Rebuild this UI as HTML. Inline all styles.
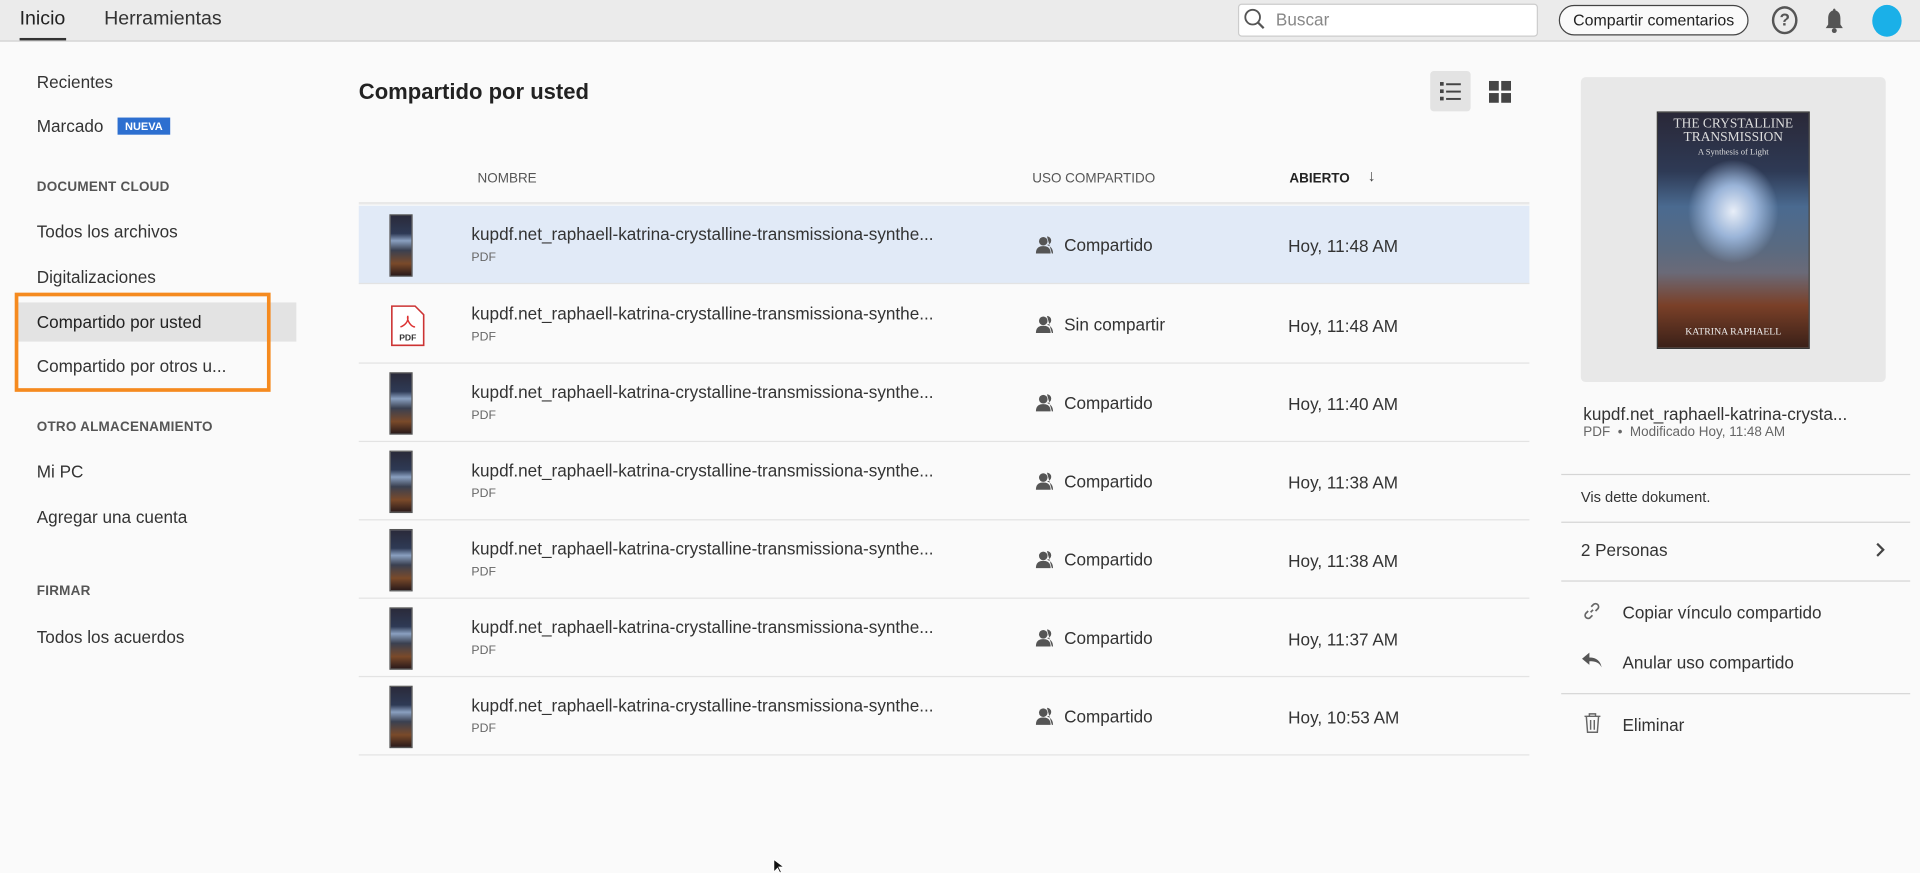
<!DOCTYPE html>
<html><head><meta charset="utf-8"><style>
*{margin:0;padding:0;box-sizing:border-box}
html,body{width:1920px;height:873px;overflow:hidden;background:#fafafa}
#w{position:absolute;left:0;top:0;width:1568px;height:713px;transform:scale(1.22449);transform-origin:0 0;font-family:"Liberation Sans",sans-serif;color:#2c2c2c}
.a{position:absolute;white-space:nowrap}
.top{position:absolute;left:0;top:0;width:1568px;height:34px;background:#ebebeb;border-bottom:1px solid #d0d0d0}
.side{font-size:14px;color:#333}
.cap{font-size:11px;font-weight:bold;color:#555;letter-spacing:0.2px}
.hdr{font-size:11px;color:#555}
.row{position:absolute;left:293px;width:956px;height:64px;border-bottom:1px solid #e3e3e3}
.fn{position:absolute;left:92px;top:15px;font-size:14px;color:#333}
.pdf{position:absolute;left:92px;top:37px;font-size:10px;color:#666}
.sh{position:absolute;left:552px;top:24px;font-size:14px;color:#333}
.dt{position:absolute;left:759px;top:25px;font-size:14px;color:#333}
.th{position:absolute;left:25px;top:7px;width:19px;height:51px;background:linear-gradient(180deg,#2a2a3a 0%,#2e3a55 30%,#8aa0c0 42%,#3a4050 58%,#7a4a2a 80%,#2a1a1a 100%);border:1px solid #555}
.hl{position:absolute;left:1275px;width:285px;height:1px;background:#d5d5d5}
.rp{font-size:14px;color:#333}
</style></head><body><div id="w">
<div class="top"></div>
<div class="a" style="left:16px;top:7px;font-size:16px;color:#222">Inicio</div>
<div class="a" style="left:16px;top:31px;width:38px;height:2px;background:#333"></div>
<div class="a" style="left:85px;top:7px;font-size:16px;color:#333">Herramientas</div>
<div class="a" style="left:1011px;top:3px;width:245px;height:27px;background:#fff;border:1px solid #ccc;border-radius:3px"></div>
<svg class="a" style="left:1015px;top:6px" width="20" height="20" viewBox="0 0 20 20"><circle cx="8" cy="8" r="6" fill="none" stroke="#555" stroke-width="1.5"/><path d="M12 12l5 5" stroke="#555" stroke-width="1.8"/></svg>
<div class="a" style="left:1042px;top:8px;font-size:14px;color:#888">Buscar</div>
<div class="a" style="left:1273px;top:4px;width:155px;height:25px;border:1px solid #444;border-radius:13px;background:#fafafa;font-size:13px;line-height:23px;text-align:center;color:#222">Compartir comentarios</div>
<div class="a" style="left:1447px;top:5px;width:21px;height:23px;border:2px solid #555;border-radius:50%;font-size:14px;font-weight:bold;text-align:center;line-height:19px;color:#555">?</div>
<svg class="a" style="left:1489px;top:6px" width="18" height="22" viewBox="0 0 18 22"><path d="M9 1c1 0 1 1 1 1.5C13 3.5 14 6 14 9v5l2 3H2l2-3V9c0-3 1-5.5 4-6.5C8 2 8 1 9 1z" fill="#555"/><circle cx="9" cy="19" r="2" fill="#555"/></svg>
<div class="a" style="left:1529px;top:4px;width:24px;height:26px;border-radius:50%;background:#1ab0e8"></div>

<div class="a side" style="left:30px;top:59px">Recientes</div>
<div class="a side" style="left:30px;top:95px">Marcado</div>
<div class="a" style="left:96px;top:96px;width:43px;height:14px;background:#2d6fd0;color:#fff;font-size:9px;font-weight:bold;text-align:center;line-height:14px">NUEVA</div>
<div class="a cap" style="left:30px;top:147px">DOCUMENT CLOUD</div>
<div class="a side" style="left:30px;top:181px">Todos los archivos</div>
<div class="a side" style="left:30px;top:218px">Digitalizaciones</div>
<div class="a" style="left:14px;top:247px;width:228px;height:32px;background:#e3e3e3"></div>
<div class="a side" style="left:30px;top:255px;color:#222">Compartido por usted</div>
<div class="a side" style="left:30px;top:291px">Compartido por otros u...</div>
<div class="a" style="left:12px;top:239px;width:209px;height:81px;border:3px solid #f58a1f"></div>
<div class="a cap" style="left:30px;top:343px">OTRO ALMACENAMIENTO</div>
<div class="a side" style="left:30px;top:377px">Mi PC</div>
<div class="a side" style="left:30px;top:414px">Agregar una cuenta</div>
<div class="a cap" style="left:30px;top:477px">FIRMAR</div>
<div class="a side" style="left:30px;top:512px">Todos los acuerdos</div>

<div class="a" style="left:293px;top:65px;font-size:18px;font-weight:bold;color:#222">Compartido por usted</div>
<div class="a" style="left:1168px;top:58px;width:33px;height:33px;background:#e3e3e3;border-radius:3px"></div>
<svg class="a" style="left:1175px;top:65px" width="20" height="20" viewBox="0 0 20 20" fill="#444"><rect x="1" y="2" width="3" height="3"/><rect x="6" y="3" width="12" height="1.6"/><rect x="1" y="8" width="3" height="3"/><rect x="6" y="9" width="12" height="1.6"/><rect x="1" y="14" width="3" height="3"/><rect x="6" y="15" width="12" height="1.6"/></svg>
<svg class="a" style="left:1216px;top:66px" width="18" height="18" viewBox="0 0 18 18" fill="#444"><rect x="0" y="0" width="8" height="8"/><rect x="10" y="0" width="8" height="8"/><rect x="0" y="10" width="8" height="8"/><rect x="10" y="10" width="8" height="8"/></svg>

<div class="a hdr" style="left:390px;top:140px">NOMBRE</div>
<div class="a hdr" style="left:843px;top:140px">USO COMPARTIDO</div>
<div class="a hdr" style="left:1053px;top:140px;font-weight:bold;color:#222">ABIERTO</div>
<div class="a" style="left:1117px;top:136px;font-size:13px;color:#444">↓</div>
<div class="a" style="left:293px;top:165px;width:956px;height:2px;background:#e8e8e8"></div>

<div class="row" style="top:168px;background:#e1eaf7"><div class="th"></div><div class="fn">kupdf.net_raphaell-katrina-crystalline-transmissiona-synthe...</div><div class="pdf">PDF</div><div class="sh" style="left:576px">Compartido</div><div class="dt">Hoy, 11:48 AM</div></div>
<div class="row" style="top:233px"><svg class="a" style="left:26px;top:16px" width="28" height="34" viewBox="0 0 28 34"><path d="M1 1h19l7 7v25H1z" fill="#fff" stroke="#c33" stroke-width="1.3"/><path d="M8 18c3-1 7-4 6-9-1 4 3 9 6 9" fill="none" stroke="#d33" stroke-width="1.2"/><text x="14" y="29" font-size="7" font-family="Liberation Sans" text-anchor="middle" fill="#333" font-weight="bold">PDF</text></svg><div class="fn">kupdf.net_raphaell-katrina-crystalline-transmissiona-synthe...</div><div class="pdf">PDF</div><div class="sh" style="left:576px">Sin compartir</div><div class="dt">Hoy, 11:48 AM</div></div>
<div class="row" style="top:297px"><div class="th"></div><div class="fn">kupdf.net_raphaell-katrina-crystalline-transmissiona-synthe...</div><div class="pdf">PDF</div><div class="sh" style="left:576px">Compartido</div><div class="dt">Hoy, 11:40 AM</div></div>
<div class="row" style="top:361px"><div class="th"></div><div class="fn">kupdf.net_raphaell-katrina-crystalline-transmissiona-synthe...</div><div class="pdf">PDF</div><div class="sh" style="left:576px">Compartido</div><div class="dt">Hoy, 11:38 AM</div></div>
<div class="row" style="top:425px"><div class="th"></div><div class="fn">kupdf.net_raphaell-katrina-crystalline-transmissiona-synthe...</div><div class="pdf">PDF</div><div class="sh" style="left:576px">Compartido</div><div class="dt">Hoy, 11:38 AM</div></div>
<div class="row" style="top:489px"><div class="th"></div><div class="fn">kupdf.net_raphaell-katrina-crystalline-transmissiona-synthe...</div><div class="pdf">PDF</div><div class="sh" style="left:576px">Compartido</div><div class="dt">Hoy, 11:37 AM</div></div>
<div class="row" style="top:553px"><div class="th"></div><div class="fn">kupdf.net_raphaell-katrina-crystalline-transmissiona-synthe...</div><div class="pdf">PDF</div><div class="sh" style="left:576px">Compartido</div><div class="dt">Hoy, 10:53 AM</div></div>
<svg class="a" style="left:844px;top:0" width="18" height="620" viewBox="0 0 18 620" fill="#555">
<g id="p"><circle cx="8" cy="197" r="3.5"/><path d="M2 207c0-5 3-6 6-6s6 1 6 6z"/><path d="M11 193a3.5 3.5 0 0 1 0 7c2 1 5 2 5 7h-1" /></g>
<use href="#p" y="65"/><use href="#p" y="129"/><use href="#p" y="193"/><use href="#p" y="257"/><use href="#p" y="321"/><use href="#p" y="385"/>
</svg>

<div class="a" style="left:1291px;top:63px;width:249px;height:249px;background:#e8e8e8;border-radius:4px"></div>
<div class="a" style="left:1353px;top:91px;width:125px;height:194px;background:radial-gradient(ellipse 30% 22% at 50% 42%,#e8eef8 0%,#9ab4d8 50%,transparent 100%),linear-gradient(180deg,#2a2838 0%,#2e3a55 25%,#4a6a90 40%,#5a6a80 58%,#6a6a78 68%,#7a4028 82%,#3a2018 100%);border:1px solid #333"></div>
<div class="a" style="left:1353px;top:96px;width:125px;text-align:center;font-family:'Liberation Serif',serif;font-size:11px;color:#ddd;line-height:11px">THE CRYSTALLINE<br>TRANSMISSION<br><span style="font-size:7px">A Synthesis of Light</span></div>
<div class="a" style="left:1353px;top:266px;width:125px;text-align:center;font-family:'Liberation Serif',serif;font-size:8px;color:#eee">KATRINA RAPHAELL</div>
<div class="a" style="left:1293px;top:330px;font-size:14px;color:#333">kupdf.net_raphaell-katrina-crysta...</div>
<div class="a" style="left:1293px;top:347px;font-size:11px;color:#666">PDF &nbsp;•&nbsp; Modificado Hoy, 11:48 AM</div>
<div class="hl" style="top:387px"></div>
<div class="a" style="left:1291px;top:399px;font-size:12px;color:#333">Vis dette dokument.</div>
<div class="hl" style="top:426px"></div>
<div class="a rp" style="left:1291px;top:441px">2 Personas</div>
<svg class="a" style="left:1530px;top:443px" width="10" height="12" viewBox="0 0 10 12"><path d="M3 1l5 5-5 5" fill="none" stroke="#444" stroke-width="1.8"/></svg>
<div class="hl" style="top:474px"></div>
<svg class="a" style="left:1292px;top:491px" width="16" height="16" viewBox="0 0 16 16" fill="none" stroke="#666" stroke-width="1.4"><path d="M7 9l2-2M5 8l-2 2a2.5 2.5 0 0 0 3.5 3.5l2-2M11 8l2-2a2.5 2.5 0 0 0-3.5-3.5l-2 2"/></svg>
<div class="a rp" style="left:1325px;top:492px">Copiar vínculo compartido</div>
<svg class="a" style="left:1291px;top:532px" width="18" height="16" viewBox="0 0 18 16" fill="#555"><path d="M7 1L1 6l6 5V8c5 0 8 1 10 5-1-5-4-8-10-8z"/></svg>
<div class="a rp" style="left:1325px;top:533px">Anular uso compartido</div>
<div class="hl" style="top:566px"></div>
<svg class="a" style="left:1293px;top:582px" width="15" height="17" viewBox="0 0 15 17" fill="none" stroke="#666" stroke-width="1.2"><path d="M1 3h13M5 3V1h5v2M2.5 3l1 13h8l1-13M6 6v8M9 6v8"/></svg>
<div class="a rp" style="left:1325px;top:584px">Eliminar</div>
<svg class="a" style="left:631px;top:701px" width="10" height="12" viewBox="0 0 10 12"><path d="M1 1v10l3-3 2 4 1-1-2-4h4z" fill="#111" stroke="#fff" stroke-width="0.6"/></svg>
</div></body></html>
